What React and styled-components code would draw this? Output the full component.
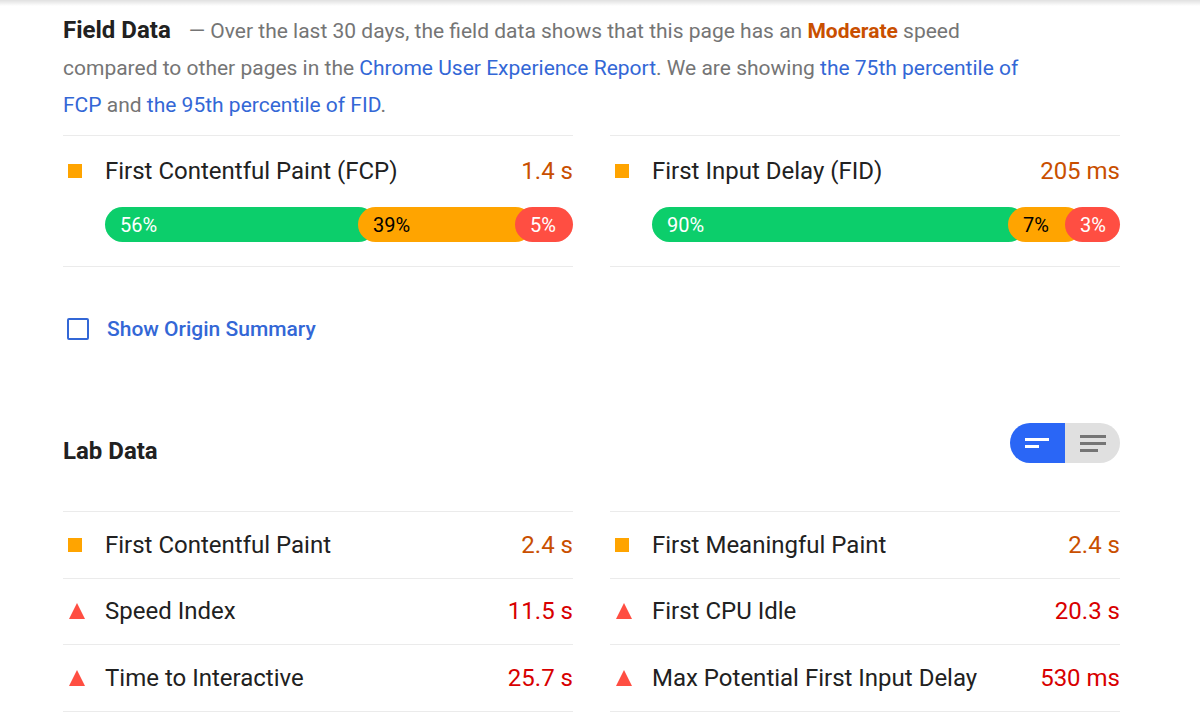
import React from 'react';
import styled, { createGlobalStyle } from 'styled-components';

const GlobalStyle = createGlobalStyle`
  html, body {
    margin: 0;
    padding: 0;
    background: #fff;
    font-family: Roboto, "Liberation Sans", Arial, sans-serif;
    color: #212121;
  }
`;

const COLORS = {
  pass: '#0cce6b',
  average: '#ffa400',
  fail: '#ff4e42',
  averageText: '#c94f00',
  failText: '#d80000',
  link: '#3367d6',
  gray: '#757575',
  divider: '#ebebeb',
};

const Page = styled.div`
  position: relative;
  width: 1200px;
  height: 712px;
  overflow: hidden;
  box-sizing: border-box;
  padding: 12px 80px 0 63px;

  &::before {
    content: '';
    position: absolute;
    top: 0;
    left: 0;
    right: 0;
    height: 6px;
    background: linear-gradient(to bottom, rgba(0, 0, 0, 0.12), rgba(0, 0, 0, 0));
  }
`;

const Intro = styled.p`
  margin: 0;
  max-width: 975px;
  font-size: 21px;
  line-height: 37px;
  color: ${COLORS.gray};
`;

const SectionTitle = styled.span`
  font-weight: 700;
  font-size: 24px;
  color: #212121;
  margin-right: 18px;
`;

const Link = styled.span`
  color: ${COLORS.link};
`;

const Moderate = styled.span`
  color: ${COLORS.averageText};
  font-weight: 700;
`;

const Grid = styled.div`
  display: grid;
  grid-template-columns: 510px 510px;
  column-gap: 37px;
  margin-top: ${(p) => p.$top}px;
`;

const FieldMetric = styled.div`
  border-top: 1px solid ${COLORS.divider};
  border-bottom: 1px solid ${COLORS.divider};
  padding: 19px 0 24px;
`;

const MetricHead = styled.div`
  display: flex;
  align-items: center;
  height: 32px;
  font-size: 24px;
`;

const Square = styled.span`
  flex: none;
  width: 14px;
  height: 14px;
  margin: 0 23px 0 5px;
  background: ${COLORS.average};
`;

const Triangle = styled.span`
  flex: none;
  width: 0;
  height: 0;
  margin: 0 20px 0 6px;
  border-left: 8px solid transparent;
  border-right: 8px solid transparent;
  border-bottom: 16px solid ${COLORS.fail};
`;

const MetricName = styled.span`
  flex: 1;
  color: #212121;
`;

const MetricValue = styled.span`
  color: ${(p) => (p.$fail ? COLORS.failText : COLORS.averageText)};
`;

const Bar = styled.div`
  display: flex;
  height: 35px;
  margin: 20px 0 0 42px;
  font-size: 20px;
`;

const Segment = styled.div`
  flex: none;
  display: flex;
  align-items: center;
  box-sizing: border-box;
  padding-left: 15px;
  margin-left: ${(p) => (p.$first ? 0 : -18)}px;
  border-radius: 18px;
  background: ${(p) => p.$bg};
  color: ${(p) => p.$fg};
`;

const OriginRow = styled.label`
  display: flex;
  align-items: center;
  margin-top: 50px;
  height: 24px;
  font-size: 21px;
  font-weight: 500;
  color: ${COLORS.link};
`;

const CheckBox = styled.span`
  flex: none;
  width: 18px;
  height: 18px;
  margin: 0 18px 0 4px;
  border: 2px solid ${COLORS.link};
  border-radius: 2px;
`;

const LabHeader = styled.div`
  display: flex;
  align-items: center;
  justify-content: space-between;
  margin-top: 82px;
  height: 40px;
`;

const LabTitle = styled.span`
  font-weight: 700;
  font-size: 24px;
  color: #212121;
  margin-top: 16px;
`;

const Toggle = styled.div`
  display: flex;
  width: 110px;
  height: 40px;
  border-radius: 20px;
  overflow: hidden;
`;

const ToggleHalf = styled.div`
  flex: 1;
  display: flex;
  align-items: center;
  justify-content: center;
  background: ${(p) => (p.$active ? '#2a66f6' : '#e0e0e0')};
`;

const LabRow = styled.div`
  display: flex;
  align-items: center;
  height: 65.5px;
  border-top: 1px solid ${COLORS.divider};
  font-size: 24px;
  &:last-child {
    border-bottom: 1px solid ${COLORS.divider};
  }
`;

const LabColumn = styled.div`
  display: flex;
  flex-direction: column;
`;

const fieldMetrics = [
  { name: 'First Contentful Paint (FCP)', value: '1.4 s', pct: ['56%', '39%', '5%'], edges: [253, 410] },
  { name: 'First Input Delay (FID)', value: '205 ms', pct: ['90%', '7%', '3%'], edges: [356, 413] },
];

const labLeft = [
  { name: 'First Contentful Paint', value: '2.4 s', fail: false },
  { name: 'Speed Index', value: '11.5 s', fail: true },
  { name: 'Time to Interactive', value: '25.7 s', fail: true },
];

const labRight = [
  { name: 'First Meaningful Paint', value: '2.4 s', fail: false },
  { name: 'First CPU Idle', value: '20.3 s', fail: true },
  { name: 'Max Potential First Input Delay', value: '530 ms', fail: true },
];

const BAR_WIDTH = 468;

const Distribution = ({ pct, edges }) => {
  const [a, b] = edges;
  return (
    <Bar>
      <Segment $first $bg={COLORS.pass} $fg="#fff" style={{ width: a + 18 }}>{pct[0]}</Segment>
      <Segment $bg={COLORS.average} $fg="#000" style={{ width: b - a + 18 }}>{pct[1]}</Segment>
      <Segment $bg={COLORS.fail} $fg="#fff" style={{ width: BAR_WIDTH - b }}>{pct[2]}</Segment>
    </Bar>
  );
};

const LabItem = ({ name, value, fail }) => (
  <LabRow>
    {fail ? <Triangle /> : <Square />}
    <MetricName>{name}</MetricName>
    <MetricValue $fail={fail}>{value}</MetricValue>
  </LabRow>
);

export default function App() {
  return (
    <>
      <GlobalStyle />
      <Page>
        <Intro>
          <SectionTitle>Field Data</SectionTitle>— Over the last 30 days, the field data shows that this page has an{' '}
          <Moderate>Moderate</Moderate> speed compared to other pages in the{' '}
          <Link>Chrome User Experience Report</Link>. We are showing <Link>the 75th percentile of FCP</Link> and{' '}
          <Link>the 95th percentile of FID</Link>.
        </Intro>

        <Grid $top={11}>
          {fieldMetrics.map((m) => (
            <FieldMetric key={m.name}>
              <MetricHead>
                <Square />
                <MetricName>{m.name}</MetricName>
                <MetricValue>{m.value}</MetricValue>
              </MetricHead>
              <Distribution pct={m.pct} edges={m.edges} />
            </FieldMetric>
          ))}
        </Grid>

        <OriginRow>
          <CheckBox />
          Show Origin Summary
        </OriginRow>

        <LabHeader>
          <LabTitle>Lab Data</LabTitle>
          <Toggle>
            <ToggleHalf $active>
              <svg width="26" height="12" viewBox="0 0 26 12">
                <rect x="0" y="1" width="24" height="3" fill="#fff" />
                <rect x="0" y="8" width="14" height="3" fill="#fff" />
              </svg>
            </ToggleHalf>
            <ToggleHalf>
              <svg width="26" height="20" viewBox="0 0 26 20">
                <rect x="0" y="2" width="26" height="3" fill="#757575" />
                <rect x="0" y="9" width="26" height="3" fill="#757575" />
                <rect x="0" y="16" width="18" height="3" fill="#757575" />
              </svg>
            </ToggleHalf>
          </Toggle>
        </LabHeader>

        <Grid $top={48}>
          <LabColumn>
            {labLeft.map((m) => <LabItem key={m.name} {...m} />)}
          </LabColumn>
          <LabColumn>
            {labRight.map((m) => <LabItem key={m.name} {...m} />)}
          </LabColumn>
        </Grid>
      </Page>
    </>
  );
}
